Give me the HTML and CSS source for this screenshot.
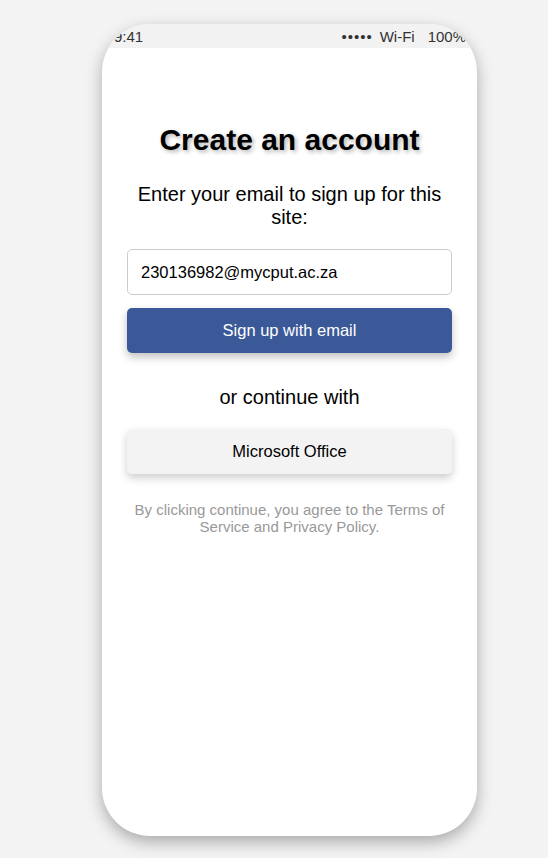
FILE: index.html
```html
<!DOCTYPE html>
<html>
<head>
<meta charset="utf-8">
<link rel="stylesheet" href="styles.css">
</head>
<body>
<div class="phone">
  <div class="status-bar">
    <span class="time">9:41</span>
    <span class="status-right"><span class="dots">&bull;&bull;&bull;&bull;&bull;</span><span class="wifi">Wi-Fi</span><span class="battery">100%</span></span>
  </div>
  <div class="content">
    <h1 class="title">Create an account</h1>
    <p class="subtitle">Enter your email to sign up for this site:</p>
    <div class="email-input">230136982@mycput.ac.za</div>
    <button class="btn btn-primary">Sign up with email</button>
    <p class="divider">or continue with</p>
    <button class="btn btn-secondary">Microsoft Office</button>
    <p class="terms">By clicking continue, you agree to the Terms of Service and Privacy Policy.</p>
  </div>
</div>
</body>
</html>
```
FILE: styles.css
```css
html, body {
  margin: 0;
  padding: 0;
}
body {
  background: #f3f3f3;
  font-family: "Liberation Sans", Arial, sans-serif;
  padding: 24px 0 0 102px;
  height: 858px;
  box-sizing: border-box;
}
.phone {
  width: 375px;
  height: 812px;
  background: #fff;
  border-radius: 48px;
  overflow: hidden;
  box-shadow: 0 6px 16px rgba(0, 0, 0, 0.3);
  display: flex;
  flex-direction: column;
}
.status-bar {
  height: 24px;
  flex: none;
  background: #f2f2f2;
  display: flex;
  justify-content: space-between;
  align-items: center;
  padding: 0 11px 0 12px;
  font-size: 15px;
  color: #333;
}
.status-right {
  display: flex;
  align-items: center;
}
.dots {
  letter-spacing: 1px;
}
.wifi {
  margin-left: 7px;
}
.battery {
  margin-left: 13px;
}
.content {
  padding: 74px 25px 0;
  display: flex;
  flex-direction: column;
  align-items: stretch;
  text-align: center;
}
.title {
  margin: 0;
  font-size: 30px;
  font-weight: bold;
  color: #000;
  text-shadow: 2px 2px 4px rgba(0, 0, 0, 0.3);
  line-height: 36px;
}
.subtitle {
  margin: 25px 0 0;
  font-size: 20px;
  line-height: 23px;
  color: #000;
}
.email-input {
  margin-top: 20px;
  height: 46px;
  box-sizing: border-box;
  border: 1px solid #ccc;
  border-radius: 5px;
  text-align: left;
  padding: 0 13px;
  display: flex;
  align-items: center;
  font-size: 16.5px;
  color: #000;
}
.btn {
  font-family: inherit;
  border: none;
  border-radius: 5px;
  height: 45px;
  font-size: 16.5px;
  cursor: pointer;
}
.btn-primary {
  margin-top: 13px;
  background: #3b5998;
  color: #fff;
  box-shadow: 0 4px 8px rgba(0, 0, 0, 0.25);
}
.divider {
  margin: 33px 0 0;
  font-size: 20px;
  line-height: 23px;
  color: #000;
}
.btn-secondary {
  margin-top: 20px;
  background: #f3f3f3;
  color: #000;
  box-shadow: 0 4px 8px rgba(0, 0, 0, 0.2);
}
.terms {
  margin: 27px 0 0;
  font-size: 15px;
  line-height: 17px;
  color: #999;
  padding: 0 4px;
}
```
